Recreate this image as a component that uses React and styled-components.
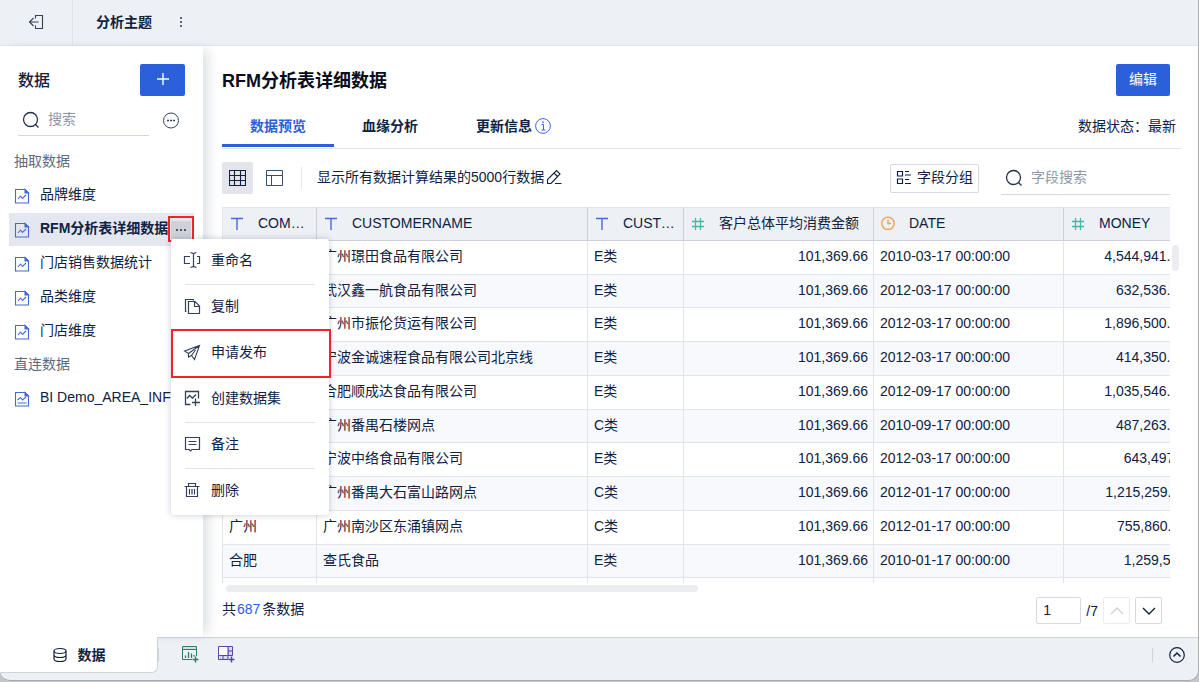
import React, { useState } from "react";
import styled, { createGlobalStyle } from "styled-components";

const GlobalStyle = createGlobalStyle`
  * { box-sizing: border-box; }
  body {
    margin: 0;
    background: #c4c6ca;
    color: #0f2242;
    font-family: "Liberation Sans", "Noto Sans CJK SC", sans-serif;
    font-size: 14px;
    line-height: 20px;
  }
  button, input {
    font: inherit;
    color: inherit;
    border: 0;
    padding: 0;
    margin: 0;
    background: none;
    outline: none;
  }
  button { cursor: pointer; }
  svg { display: block; flex: none; }
`;

const Window = styled.div`
  display: flex;
  flex-direction: column;
  height: calc(100vh - 1px);
  background: #edf0f5;
  border-right: 1px solid #a9abaf;
  border-bottom: 1px solid #a9abaf;
  border-radius: 0 0 10px 10px;
  overflow: hidden;
`;

const TopBar = styled.header`
  display: flex;
  align-items: center;
  flex: none;
  height: 46px;
  padding-bottom: 1px;
  border-bottom: 1px solid #e2e5ec;
`;

const BackButton = styled.button`
  display: flex;
  align-items: center;
  justify-content: center;
  width: 73px;
  height: 45px;
  border-right: 1px solid #e0e3ea;
`;

const TopicName = styled.strong`
  margin: 0 27px 0 23px;
`;

const Body = styled.div`
  display: flex;
  flex: 1;
  min-height: 0;
`;

/* ---------- sidebar ---------- */

const Sidebar = styled.aside`
  position: relative;
  z-index: 2;
  flex: none;
  width: 203px;
  padding-top: 18px;
  background: #fff;
  box-shadow: 8px 0 12px -4px rgba(20, 35, 70, 0.16);
`;

const SideHead = styled.div`
  display: flex;
  align-items: center;
  justify-content: space-between;
  padding: 0 18px;
`;

const SideTitle = styled.h2`
  margin: 0;
  padding-top: 2px;
  font-size: 16px;
  font-weight: 500;
`;

const PrimaryButton = styled.button`
  display: flex;
  align-items: center;
  justify-content: center;
  width: ${(p) => p.$width}px;
  height: 32px;
  padding-bottom: 2px;
  border-radius: 2px;
  background: #2c60db;
  color: #fff;
`;

const SideSearch = styled.div`
  display: flex;
  align-items: center;
  gap: 13px;
  padding: 9px 23px 9px 18px;
`;

const SearchBox = styled.label`
  display: flex;
  align-items: center;
  flex: ${(p) => (p.$width ? "none" : 1)};
  width: ${(p) => (p.$width ? p.$width + "px" : "auto")};
  height: ${(p) => (p.$width ? 34 : 31)}px;
  min-width: 0;
  gap: 8px;
  padding: 0 0 0 4px;
  border-bottom: 1px solid #d5d8df;

  input {
    flex: 1;
    min-width: 0;
    padding-bottom: 2px;
  }
  input::placeholder {
    color: #8f98a8;
    opacity: 1;
  }
`;

const GroupLabel = styled.div`
  height: 33px;
  padding-left: 14px;
  line-height: 32px;
  color: #5d6b82;
`;

const DataList = styled.ul`
  list-style: none;
  margin: 0;
  padding: 0 9px;
`;

const DataItem = styled.li`
  position: relative;
  z-index: ${(p) => (p.$raised ? 1 : 0)};
  display: flex;
  align-items: center;
  height: 34px;
  gap: 10px;
  padding-left: 5px;
  white-space: nowrap;
  border-top: 1px solid #fff;
  background: ${(p) => (p.$active ? "#e4e7ef" : "#fff")};
  font-weight: ${(p) => (p.$active ? "bold" : "normal")};
`;

const ItemName = styled.span`
  padding-bottom: 3px;
`;

const MoreButton = styled.button`
  position: absolute;
  top: 3px;
  right: 0;
  display: flex;
  align-items: center;
  justify-content: center;
  width: 26px;
  height: 26px;
  padding: 3px 1px 1px;
  border: 2px solid #f5222d;
  background: #cdd1db content-box;
`;

const Menu = styled.div`
  position: absolute;
  top: 26px;
  left: 162px;
  width: 158px;
  background: #fff;
  border-radius: 3px;
  box-shadow: 0 0 6px rgba(20, 35, 70, 0.24);
  font-weight: normal;
`;

const MenuItem = styled.button`
  position: relative;
  display: block;
  width: 100%;
  height: 46px;
  padding: 0 14px;
  text-align: left;

  span {
    display: flex;
    align-items: center;
    gap: 10px;
    height: 46px;
    padding-bottom: 3px;
    border-bottom: 1px solid #e1e4ea;
  }
  svg {
    margin-left: -2px;
    color: #33415c;
  }
  &:last-child span {
    border-color: transparent;
  }
  &::after {
    content: "";
    display: ${(p) => (p.$marked ? "block" : "none")};
    position: absolute;
    inset: -2px -2px -1px 0;
    border: 2px solid #f5222d;
  }
`;

/* ---------- main panel ---------- */

const Main = styled.main`
  display: flex;
  flex-direction: column;
  flex: 1;
  min-width: 0;
  padding: 18px 17px 13px 19px;
  background: #fff;
`;

const TitleRow = styled.div`
  display: flex;
  align-items: center;
  justify-content: space-between;
  flex: none;
  padding-right: 11px;
`;

const Title = styled.h1`
  margin: 0;
  padding-top: 2px;
  font-size: 18px;
  color: #060d1c;
`;

const Tabs = styled.nav`
  display: flex;
  flex: none;
  height: 43px;
  margin: 10px 0 12px;
  padding-right: 5px;
  border-bottom: 1px solid #e4e6ee;
`;

const Tab = styled.button`
  display: flex;
  align-items: center;
  justify-content: center;
  gap: 3px;
  height: 41px;
  min-width: 112px;
  padding: 1px ${(p) => (p.$wide ? 30 : 0)}px 0;
  font-weight: bold;
  color: ${(p) => (p.$active ? "#2c60db" : "#0f2242")};
  border-bottom: 3px solid ${(p) => (p.$active ? "#2c60db" : "transparent")};
`;

const Status = styled.div`
  margin-left: auto;
  padding-top: 10px;
`;

const Toolbar = styled.div`
  display: flex;
  align-items: center;
  flex: none;
  height: 34px;
  margin-bottom: 12px;
  padding-right: 11px;
`;

const ViewButtons = styled.div`
  display: flex;
  gap: 6px;
  margin-right: 11px;
`;

const ViewButton = styled.button`
  display: flex;
  align-items: center;
  justify-content: center;
  width: 31px;
  height: 32px;
  border-radius: 2px;
  background: ${(p) => (p.$active ? "#e3e5ea" : "transparent")};
`;

const Divider = styled.i`
  width: 1px;
  height: ${(p) => p.$height}px;
  background: ${(p) => p.$color};
`;

const RowsNote = styled.div`
  display: flex;
  align-items: center;
  gap: 2px;
  margin-right: auto;
  padding: 0 0 2px 15px;
`;

const GroupButton = styled.button`
  display: flex;
  align-items: center;
  gap: 5px;
  height: 29px;
  margin-right: 22px;
  padding: 0 5px 2px;
  border: 1px solid #d6d9e2;
  border-radius: 2px;
`;

const TableArea = styled.div`
  display: flex;
  flex: 1;
  min-height: 0;
`;

const TableClip = styled.div`
  flex: 1;
  min-width: 0;
  overflow: hidden;
`;

const Table = styled.table`
  width: 100%;
  min-width: 970px;
  table-layout: fixed;
  border-spacing: 0;

  th, td {
    height: 34px;
    padding: 0 5px 3px 6px;
    overflow: hidden;
    white-space: nowrap;
    text-align: left;
    font-weight: normal;
    border-right: 1px solid #e1e4eb;
    border-bottom: 1px solid #e1e4eb;
  }
  th {
    padding: 0 6px 2px 7px;
    background: #edf0f5;
    border-color: #cdd1d9;
    border-top: 1px solid #e1e4eb;
  }
  th:first-child, td:first-child {
    border-left: 1px solid #e1e4eb;
  }
  td:nth-child(4), td:last-child {
    text-align: right;
  }
  tbody tr:nth-child(even) {
    background: #f7f9fd;
  }
  tbody tr:nth-child(4n + 2) td {
    height: 33px;
  }
`;

const HeadCell = styled.div`
  display: flex;
  align-items: center;
  gap: 14px;

  span {
    overflow: hidden;
    text-overflow: ellipsis;
  }
`;

const ScrollTrack = styled.div`
  flex: none;
  width: 11px;
  padding: 38px 2px 0;
`;

const Thumb = styled.div`
  width: ${(p) => p.$width};
  height: ${(p) => p.$height}px;
  border-radius: 4px;
  background: #ecedf0;
`;

const BottomTrack = styled.div`
  flex: none;
  height: 14px;
  padding: 2px 11px 0 4px;
`;

const Pager = styled.div`
  display: flex;
  align-items: center;
  flex: none;
  gap: 5px;
  padding-right: 19px;
`;

const Total = styled.div`
  margin-right: auto;
  padding-bottom: 3px;

  b {
    font-weight: normal;
    color: #2c60db;
    margin: 0 2px 0 1px;
  }
`;

const PageInput = styled.input`
  width: 45px;
  height: 27px;
  padding: 0 6px 2px;
  border: 1px solid #d6d9e2;
  border-radius: 2px;
`;

const PageButton = styled.button`
  display: flex;
  align-items: center;
  justify-content: center;
  width: 27px;
  height: 27px;
  border: 1px solid ${(p) => (p.disabled ? "#ebecf0" : "#d6d9e2")};
  border-radius: 2px;
  color: ${(p) => (p.disabled ? "#cfd2da" : "#0f2242")};
`;

/* ---------- bottom bar ---------- */

const BottomBar = styled.footer`
  display: flex;
  flex: none;
  height: 43px;
  border-top: 1px solid #cfd3dc;
`;

const DataTab = styled.button`
  position: relative;
  z-index: 3;
  display: flex;
  align-items: center;
  justify-content: center;
  gap: 10px;
  width: 158px;
  height: 36px;
  margin-top: -1px;
  background: #fff;
  border-right: 1px solid #cfd3dc;
  border-bottom: 1px solid #cfd3dc;
  border-radius: 0 0 6px 0;
  font-weight: bold;
`;

const AddTools = styled.div`
  display: flex;
  flex: 1;
  align-items: center;
  gap: 18px;
  height: 34px;
`;

const ToolButtons = styled.div`
  display: flex;
  gap: 18px;
  padding: 0 0 2px 4px;
`;

const BarEnd = styled.div`
  display: flex;
  align-items: center;
  gap: 16px;
  height: 34px;
  padding-right: 13px;
`;

/* ---------- icons ---------- */

const Icon = ({ size = 16, box = 16, color = "currentColor", width = 1, children }) => (
  <svg width={size} height={size} viewBox={`0 0 ${box} ${box}`} fill="none" stroke={color} strokeWidth={width}>
    {children}
  </svg>
);

const BackIcon = () => (
  <Icon color="#33415c" width={1.1}>
    <path d="M7.5 4.500V1.500H14.500V14.500H7.500V11.500M10.500 8H1.500M5.500 4L1.500 8L5.500 12" />
  </Icon>
);

const DotsVertical = () => (
  <svg width="4" height="12" fill="#5a667c">
    <path d="M1 1h2v2H1zM1 5h2v2H1zM1 9h2v2H1z" />
  </svg>
);

const SearchIcon = () => (
  <Icon size={18} box={18} width={1.3} color="#22314d">
    <circle cx="8.500" cy="8.500" r="7" />
    <path d="M13.500 13.500L16.500 16.500" />
  </Icon>
);

const MoreCircle = () => (
  <Icon size={18} box={18} color="#33415c">
    <circle cx="9" cy="8.500" r="7.500" />
    <path d="M5 8.500h2M8 8.500h2M11 8.500h2" strokeWidth="1.500" />
  </Icon>
);

const FileIcon = ({ live }) => (
  <Icon color="#4668d9" width={1.1}>
    <path d="M1.500 1.500H11L14.500 5V15H1.500Z" />
    <path d="M11 1.500V5H14.500Z" fill="#4668d9" />
    <path d={live ? "M3.500 9L6.500 6.500L8.500 9L12 6M3.500 12H12.500" : "M4 11L6.500 8L8.500 10.500L12 7"} />
  </Icon>
);

const RenameIcon = () => (
  <Icon size={18} box={18} width={1.2}>
    <path d="M7 5.500H1.500V12.500H7M14 5.500H16.500V12.500H14M10.500 2.500V15.500M7.500 1.500L10.500 2.500L13.500 1.500M7.500 16.500L10.500 15.500L13.500 16.500" />
  </Icon>
);

const CopyIcon = () => (
  <Icon size={18} box={18} width={1.2}>
    <path d="M3.500 14.500H2.500V2.500H10.500V3.500M5.500 4.500H12L16.500 9V16.500H5.500ZM11.500 4.500V9.500H16.500" />
  </Icon>
);

const SendIcon = () => (
  <Icon size={18} box={18} width={1.1}>
    <path d="M1.500 8L16.500 2.500L11.500 16.500L8.500 12.500L5.500 14V10.500ZM16.500 2.500L5.500 10.500M12.500 7L8.500 12.500" />
  </Icon>
);

const DatasetIcon = () => (
  <Icon size={18} box={18} width={1.3}>
    <path d="M7.500 15.500H2.500V2.500H15.500V9.500M12.500 9.500V17M9 13.500H17M4 9.500L6.500 6.500L9.500 9L13 5.500" />
  </Icon>
);

const NoteIcon = () => (
  <Icon size={18} box={18} width={1.2}>
    <path d="M2.500 2.500H16.500V14.500H9L7.500 16L6 14.500H2.500ZM5.500 6.500H13.500M5.500 9.500H13.500" />
  </Icon>
);

const TrashIcon = () => (
  <Icon size={18} box={18} width={1.2}>
    <path d="M1.500 5.500H16.500M3.500 5.500V15.500H14.500V5.500M5.500 5V2.500H12.500V5M6.500 8V13.500M9 8V13.500M11.500 8V13.500" />
  </Icon>
);

const GridIcon = () => (
  <Icon size={17} box={17} width={1.1}>
    <path d="M.5 .5H16.500V15.500H.5ZM.5 5.500H16.500M.5 10.500H16.500M5.500 .5V15.500M11.500 .5V15.500" />
  </Icon>
);

const LayoutIcon = () => (
  <Icon size={17} box={17} color="#33536c">
    <path d="M.5 .5H16.500V15.500H.5ZM.5 5.500H16.500M5.500 5.500V15.500" />
  </Icon>
);

const PencilIcon = () => (
  <Icon width={1.1}>
    <path d="M1.500 14.500V10.500L10.500 1.500L14 5L5 14.500ZM8 4L11.500 7.500M9 14.500H15.500" />
  </Icon>
);

const FieldsIcon = () => (
  <Icon width={1.2}>
    <path d="M1.500 2.500H6.500V7H1.500ZM1.500 10H6.500V14.500H1.500ZM9 2.500H13M9 6H15M9 10.500H13M9 14.500H15" />
  </Icon>
);

const InfoIcon = () => (
  <Icon color="#4668d9">
    <circle cx="8" cy="8" r="7.400" />
    <path d="M6.500 6.500H8.500V12M6.500 12H10.500" />
    <path d="M8 3.500V5" strokeWidth="1.500" />
  </Icon>
);

const TypeIcon = ({ type }) => {
  if (type === "text") {
    return (
      <Icon size={14} box={14} color="#4a68db" width={1.4}>
        <path d="M1 2.500H13M7 2.500V14" />
      </Icon>
    );
  }
  if (type === "date") {
    return (
      <Icon size={14} box={14} color="#f2a550" width={1.4}>
        <circle cx="7" cy="7.300" r="6.200" />
        <path d="M7 3.500V7.500H10" />
      </Icon>
    );
  }
  return (
    <Icon size={14} box={14} color="#46b7a5" width={1.3}>
      <path d="M1 5.500H13M1 10.500H13M4.500 2V14M9.500 2V14" />
    </Icon>
  );
};

const DatabaseIcon = () => (
  <Icon width={1.2}>
    <ellipse cx="8" cy="4" rx="6" ry="2.500" />
    <path d="M2 4V12C2 15.300 14 15.300 14 12V4M2 8C2 11.300 14 11.300 14 8" />
  </Icon>
);

const AddChartIcon = () => (
  <Icon size={18} box={18} color="#35776c">
    <path d="M1.500 1.500H15.500V4.500H1.500Z" fill="#cfe2e0" />
    <path d="M11 14.500H1.500V4.500H15.500V11" />
    <path d="M4.500 13V10.500M7.500 13V7M10.500 13V8.500M13 11.500V10" strokeWidth="1.300" />
    <path d="M14.500 11.500V17.500M11.500 14.500H17.500" strokeWidth="1.500" />
  </Icon>
);

const AddBoardIcon = () => (
  <Icon size={18} box={18} color="#5747a8">
    <path d="M11 1.500H15.500V10.500H11Z" fill="#d9d5f2" />
    <path d="M1.500 10.500H11V14.500H1.500Z" fill="#d9d5f2" />
    <path d="M1.500 1.500H11V10.500H1.500Z" fill="#fff" />
    <path d="M11 6H15.500M6 10.500V14.500" />
    <path d="M14.500 11.500V17.500M11.500 14.500H17.500" strokeWidth="1.500" />
  </Icon>
);

const Chevron = ({ up }) => (
  <Icon width={1.4}>
    <path d={up ? "M2 11L8 5L14 11" : "M2 5L8 11L14 5"} />
  </Icon>
);

/* ---------- data ---------- */

const extracted = ["品牌维度", "RFM分析表详细数据", "门店销售数据统计", "品类维度", "门店维度"];

const menuItems = [
  { label: "重命名", icon: <RenameIcon /> },
  { label: "复制", icon: <CopyIcon /> },
  { label: "申请发布", icon: <SendIcon />, marked: true },
  { label: "创建数据集", icon: <DatasetIcon /> },
  { label: "备注", icon: <NoteIcon /> },
  { label: "删除", icon: <TrashIcon /> },
];

const columns = [
  { name: "COMPANY", type: "text", width: 95 },
  { name: "CUSTOMERNAME", type: "text", width: 271 },
  { name: "CUSTOMERTYPE", type: "text", width: 96 },
  { name: "客户总体平均消费金额", type: "number", width: 190 },
  { name: "DATE", type: "date", width: 190 },
  { name: "MONEY", type: "number" },
];

const AVG = "101,369.66";
const rows = [
  ["", "广州璟田食品有限公司", "E类", AVG, "2010-03-17 00:00:00", "4,544,941.06"],
  ["", "武汉鑫一航食品有限公司", "E类", AVG, "2012-03-17 00:00:00", "632,536.95"],
  ["", "广州市振伦货运有限公司", "E类", AVG, "2012-03-17 00:00:00", "1,896,500.32"],
  ["", "宁波金诚速程食品有限公司北京线", "E类", AVG, "2012-03-17 00:00:00", "414,350.85"],
  ["", "合肥顺成达食品有限公司", "E类", AVG, "2012-09-17 00:00:00", "1,035,546.05"],
  ["", "广州番禺石楼网点", "C类", AVG, "2010-09-17 00:00:00", "487,263.88"],
  ["", "宁波中络食品有限公司", "E类", AVG, "2012-03-17 00:00:00", "643,497.1"],
  ["", "广州番禺大石富山路网点", "C类", AVG, "2012-01-17 00:00:00", "1,215,259.11"],
  ["广州", "广州南沙区东涌镇网点", "C类", AVG, "2012-01-17 00:00:00", "755,860.11"],
  ["合肥", "查氏食品", "E类", AVG, "2010-01-17 00:00:00", "1,259,543"],
  ["", "", "", "", "", ""],
];

export default function App() {
  const [selected, setSelected] = useState("RFM分析表详细数据");
  const [menuOpen, setMenuOpen] = useState(true);
  const [page, setPage] = useState("1");

  return (
    <Window>
      <GlobalStyle />
      <TopBar>
        <BackButton aria-label="返回"><BackIcon /></BackButton>
        <TopicName>分析主题</TopicName>
        <button aria-label="更多"><DotsVertical /></button>
      </TopBar>

      <Body>
        <Sidebar>
          <SideHead>
            <SideTitle>数据</SideTitle>
            <PrimaryButton $width={45} aria-label="新增">
              <Icon width={1.4}><path d="M8 2V14M2 8H14" /></Icon>
            </PrimaryButton>
          </SideHead>
          <SideSearch>
            <SearchBox>
              <SearchIcon />
              <input placeholder="搜索" aria-label="搜索" />
            </SearchBox>
            <button aria-label="更多操作"><MoreCircle /></button>
          </SideSearch>

          <GroupLabel>抽取数据</GroupLabel>
          <DataList>
            {extracted.map((name) => (
              <DataItem
                key={name}
                $active={name === selected}
                $raised={name === "RFM分析表详细数据"}
                onClick={() => setSelected(name)}
              >
                <FileIcon />
                <ItemName>{name}</ItemName>
                {name === "RFM分析表详细数据" && (
                  <>
                    <MoreButton aria-label="操作" onClick={() => setMenuOpen(!menuOpen)}>
                      <svg width="12" height="4" fill="#4a5770">
                        <path d="M1 1h2v2H1zM5 1h2v2H5zM9 1h2v2H9z" />
                      </svg>
                    </MoreButton>
                    {menuOpen && (
                      <Menu>
                        {menuItems.map((item) => (
                          <MenuItem key={item.label} $marked={item.marked}>
                            <span>{item.icon}{item.label}</span>
                          </MenuItem>
                        ))}
                      </Menu>
                    )}
                  </>
                )}
              </DataItem>
            ))}
          </DataList>
          <GroupLabel>直连数据</GroupLabel>
          <DataList>
            <DataItem><FileIcon live /><ItemName>BI Demo_AREA_INFO</ItemName></DataItem>
          </DataList>
        </Sidebar>

        <Main>
          <TitleRow>
            <Title>RFM分析表详细数据</Title>
            <PrimaryButton $width={54}>编辑</PrimaryButton>
          </TitleRow>

          <Tabs>
            <Tab $active>数据预览</Tab>
            <Tab>血缘分析</Tab>
            <Tab $wide>更新信息<InfoIcon /></Tab>
            <Status>数据状态：最新</Status>
          </Tabs>

          <Toolbar>
            <ViewButtons>
              <ViewButton $active aria-label="表格视图"><GridIcon /></ViewButton>
              <ViewButton aria-label="布局视图"><LayoutIcon /></ViewButton>
            </ViewButtons>
            <Divider $height={22} $color="#e4e6ee" />
            <RowsNote>
              显示所有数据计算结果的5000行数据
              <button aria-label="修改行数"><PencilIcon /></button>
            </RowsNote>
            <GroupButton><FieldsIcon />字段分组</GroupButton>
            <SearchBox $width={169}>
              <SearchIcon />
              <input placeholder="字段搜索" aria-label="字段搜索" />
            </SearchBox>
          </Toolbar>

          <TableArea>
            <TableClip>
              <Table>
                <colgroup>
                  {columns.map((c) => <col key={c.name} width={c.width} />)}
                </colgroup>
                <thead>
                  <tr>
                    {columns.map((c) => (
                      <th key={c.name}>
                        <HeadCell><TypeIcon type={c.type} /><span>{c.name}</span></HeadCell>
                      </th>
                    ))}
                  </tr>
                </thead>
                <tbody>
                  {rows.map((row, i) => (
                    <tr key={i}>
                      {row.map((cell, j) => <td key={j}>{cell}</td>)}
                    </tr>
                  ))}
                </tbody>
              </Table>
            </TableClip>
            <ScrollTrack><Thumb $width="7px" $height={26} /></ScrollTrack>
          </TableArea>
          <BottomTrack><Thumb $width="50%" $height={7} /></BottomTrack>

          <Pager>
            <Total>共<b>687</b>条数据</Total>
            <PageInput aria-label="页码" value={page} onChange={(e) => setPage(e.target.value)} />
            <span>/7</span>
            <PageButton disabled aria-label="上一页"><Chevron up /></PageButton>
            <PageButton aria-label="下一页"><Chevron /></PageButton>
          </Pager>
        </Main>
      </Body>

      <BottomBar>
        <DataTab><DatabaseIcon />数据</DataTab>
        <AddTools>
          <Divider $height={14} $color="#cfd3dc" />
          <ToolButtons>
            <button aria-label="添加组件"><AddChartIcon /></button>
            <button aria-label="添加仪表板"><AddBoardIcon /></button>
          </ToolButtons>
        </AddTools>
        <BarEnd>
          <Divider $height={14} $color="#cfd3dc" />
          <button aria-label="展开">
            <Icon width={1.2}>
              <circle cx="8" cy="8" r="7.300" />
              <path d="M4.500 9.500L8 6L11.500 9.500" strokeWidth="1.500" />
            </Icon>
          </button>
        </BarEnd>
      </BottomBar>
    </Window>
  );
}
